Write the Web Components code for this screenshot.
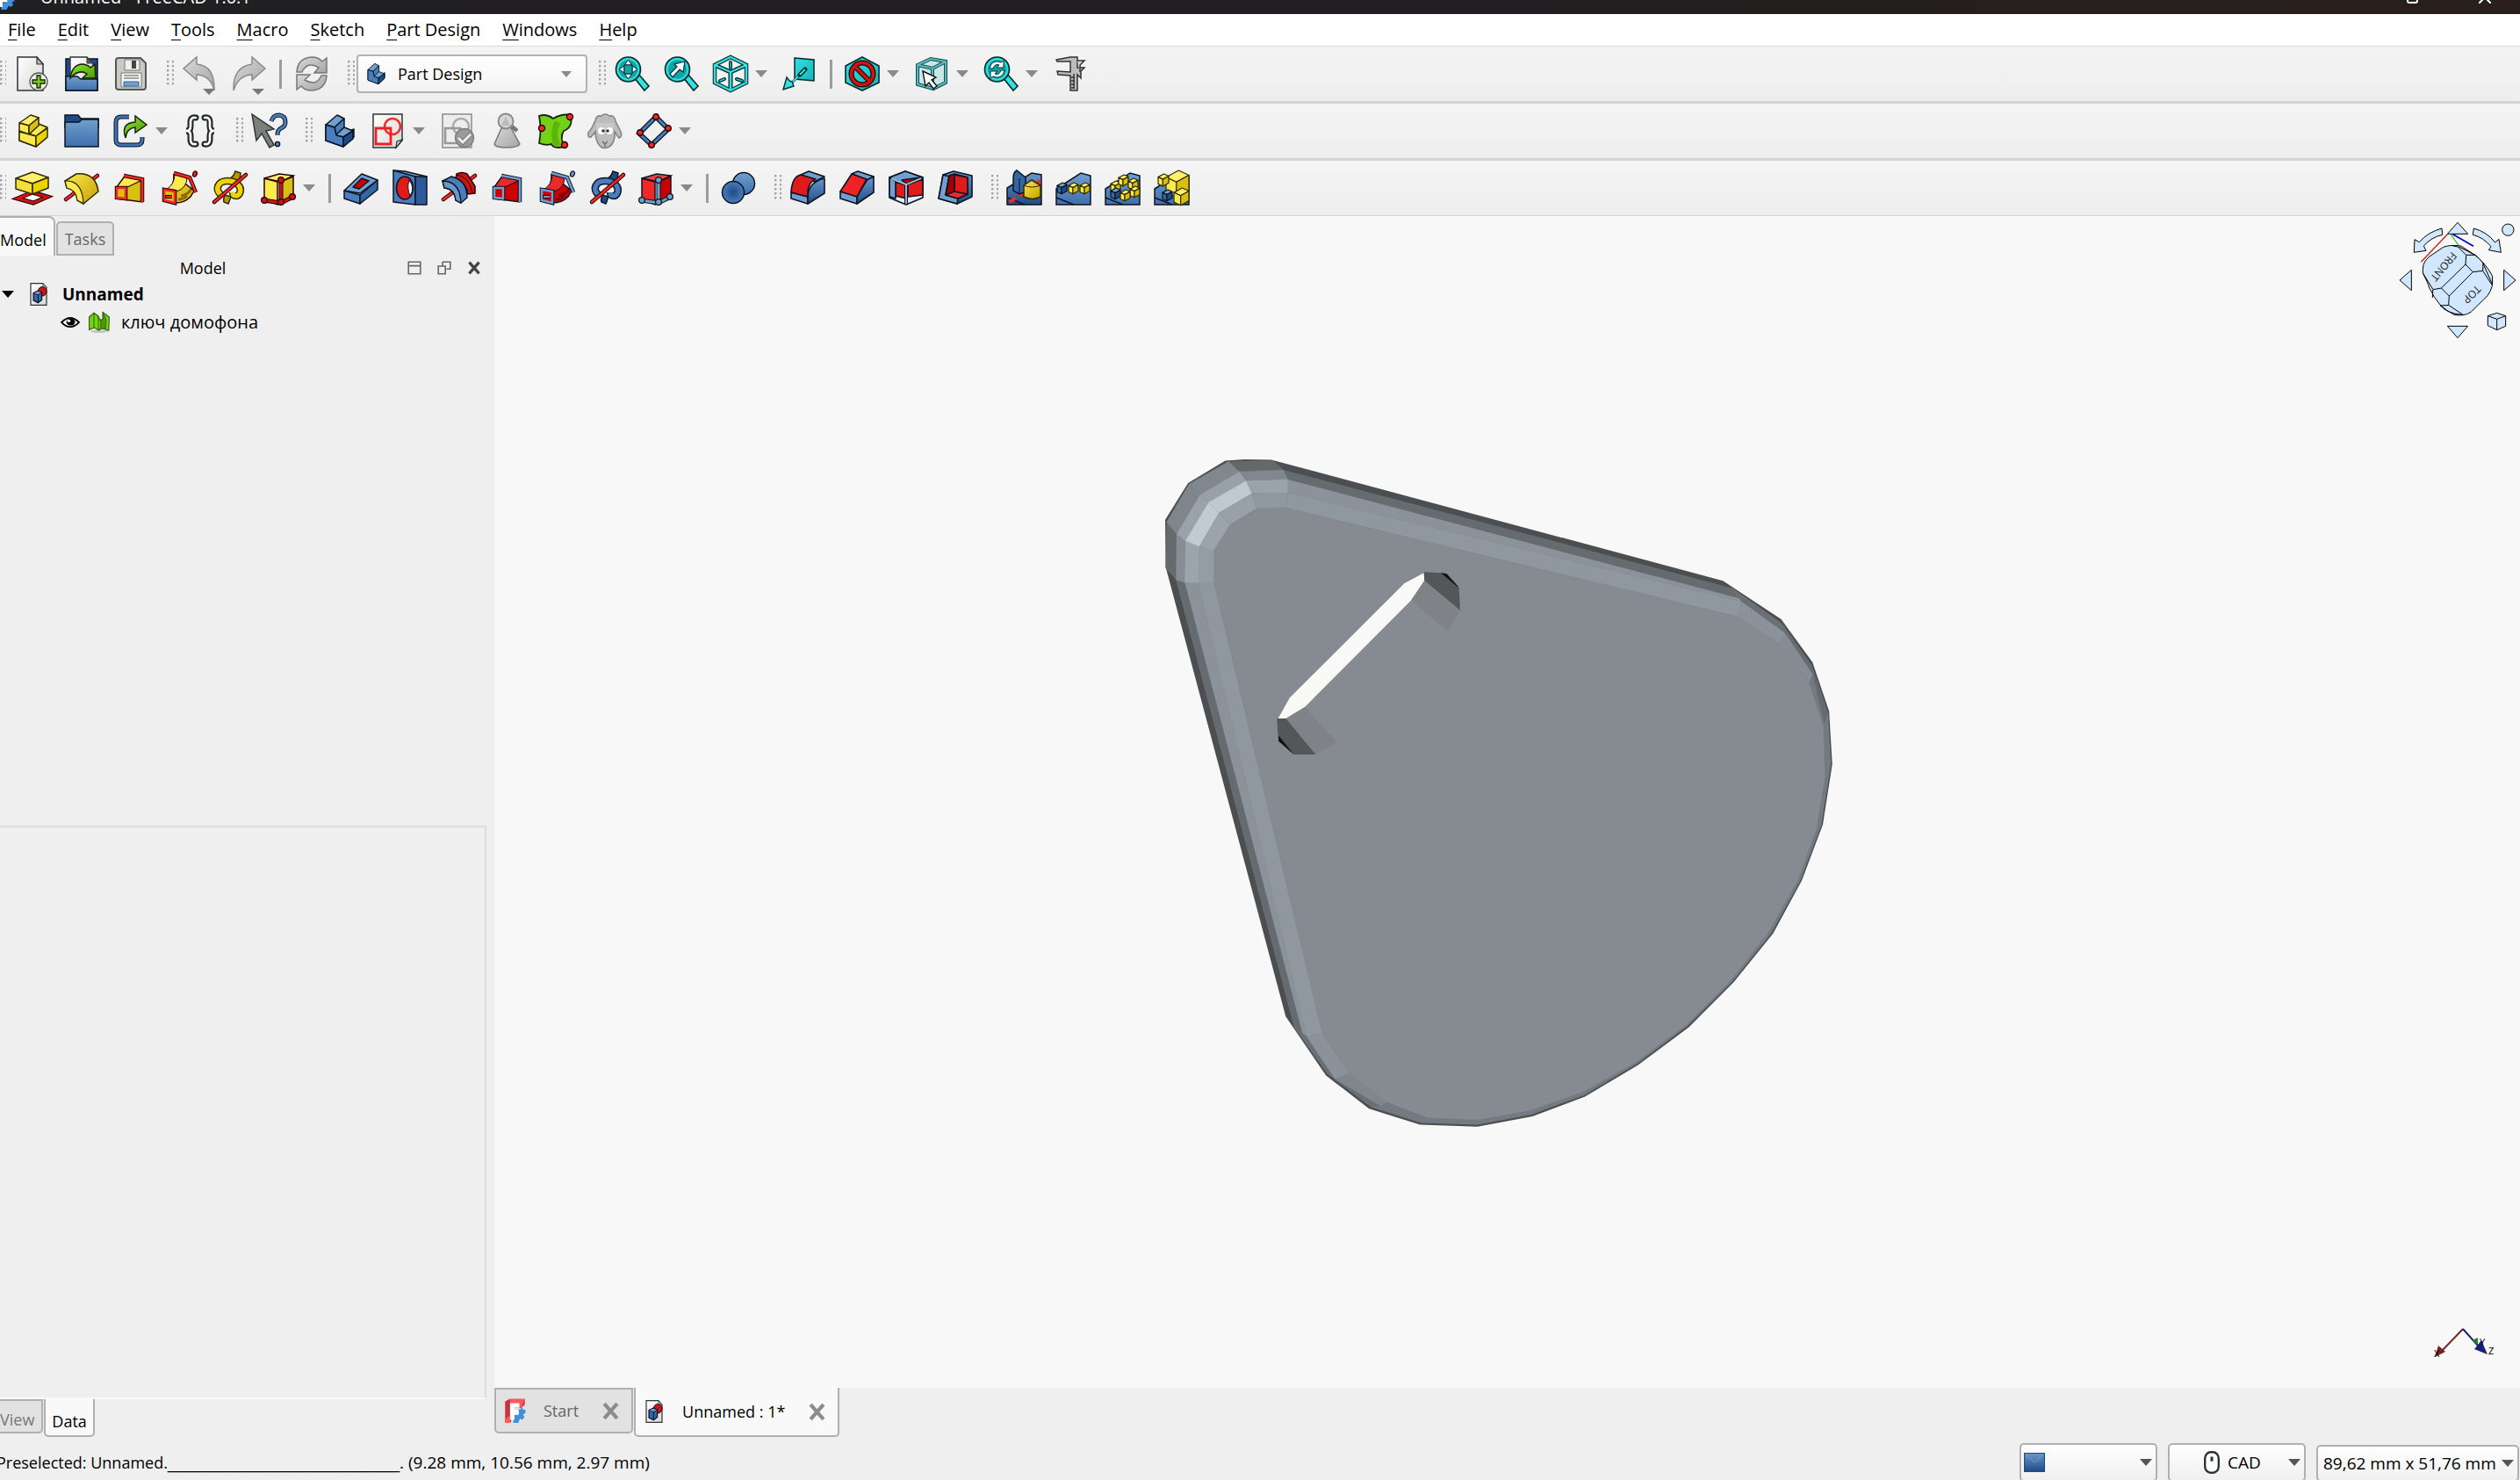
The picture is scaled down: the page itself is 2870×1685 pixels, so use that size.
<!DOCTYPE html>
<html lang="en">
<head>
<meta charset="utf-8">
<title>Unnamed - FreeCAD 1.0.1</title>
<style>
html,body{margin:0;height:100%;overflow:hidden}
body{font-family:"Open Sans","Noto Sans",sans-serif;font-size:19px;color:#000;background:#efefef}
</style>
</head>
<body>
<fc-app></fc-app>
<script>
/* ---------- icon artwork, 40 x 40 units ---------- */
const cube = (x, y, s, t, l, r, k) => {
  const h = s * .3, w = s * .55;
  return `<g stroke="${k}" stroke-width="1.2" stroke-linejoin="round"><path fill="${t}" d="M${x} ${y + h}l${w} ${-h}l${s - w} ${h * .7}l${-w} ${h}z"/><path fill="${l}" d="M${x} ${y + h}l${s - w} ${h * .7}v${s * .65}l${-(s - w)} ${-h * .7}z"/><path fill="${r}" d="M${x + s - w} ${y + h * 1.7}l${w} ${-h}v${s * .65}l${-w} ${h}z"/></g>`;
};
const yc = (x, y, s) => cube(x, y, s, '#fff06a', '#fce94f', '#d9bf10', '#302b00');
const bc = (x, y, s) => cube(x, y, s, '#729fcf', '#3465a4', '#204a87', '#0b1521');
const magnifier = inner => `<path d="M22 24l5-4 12 14-5 5z" fill="#34e0e2" stroke="#042a2a" stroke-width="1.6"/><circle cx="15.500" cy="15" r="14" fill="url(#teal)" stroke="#042a2a" stroke-width="1.6"/><circle cx="15.500" cy="15" r="11.500" fill="#0fa5a7" stroke="#34e0e2" stroke-width="1.500"/>${inner}`;
const loft = (f, f2, e, k) => `<path d="M12 8l21 3v25L4 32V19z" fill="${f2}" stroke="${k}" stroke-width="1.500"/><path d="M13 7l20 4-19 9-10-1z" fill="${f}" stroke="${k}" stroke-width="1.200"/><path d="M12 6l21 4v26" fill="none" stroke="${k}" stroke-width="4.500"/><path d="M12 6l21 4v26" fill="none" stroke="${e}" stroke-width="2.500"/><path d="M4 20h10v12l-10-1z" fill="${f}" stroke="${k}" stroke-width="4.500"/><path d="M4 20h10v12l-10-1z" fill="${f2}" stroke="${e}" stroke-width="2.500"/>`;
const pipe = (f, f2, e, k) => `<path d="M13 5l23 18-4 7q-8 8-20 7L4 26Q14 18 13 5z" fill="${f2}" stroke="${k}" stroke-width="1.500"/><path d="M14 4l14 4q0 12-12 16l-12-2Q14 16 14 4z" fill="${f}" stroke="${k}"/><path d="M21 29q8-1 12-8M18 33q6 0 10-4" fill="none" stroke="${k}" stroke-width="3" opacity=".45"/><path d="M13 3l18 5 7 17" fill="none" stroke="${k}" stroke-width="4.500"/><path d="M13 3l18 5 7 17" fill="none" stroke="${e}" stroke-width="2.500"/><path d="M2 22l12 2v13L2 34z" fill="${f}" stroke="${k}" stroke-width="4.500"/><path d="M2 22l12 2v13L2 34z" fill="${f2}" stroke="${e}" stroke-width="2.500"/><path d="M3 30h8" stroke="${k}" stroke-width="4"/><path d="M4 30h7" stroke="${e}" stroke-width="2"/><ellipse cx="37" cy="4" rx="2.200" ry="3.200" fill="${e}" stroke="${k}" stroke-width="1.300" transform="rotate(20 37 4)"/>`;
const helix = (f, f2, k) => `<path d="M19 10q6-2 8-9l6 2-1 9-6 4z" fill="${f2}" stroke="${k}" stroke-width="1.500"/><path d="M15 28l7 2-3 8-5-2q-1-3 1-8z" fill="${f2}" stroke="${k}" stroke-width="1.500"/><path d="M11 28C3 22 7 12 18 12c11 0 17 7 14 14-2 4-8 4-8-1" fill="none" stroke="${k}" stroke-width="8.500"/><path d="M11 28C3 22 7 12 18 12c11 0 17 7 14 14-2 4-8 4-8-1" fill="none" stroke="${f}" stroke-width="5.500"/><path d="M3 36L39 5" stroke="#280000" stroke-width="4.500" stroke-linecap="round"/><path d="M3 36L39 5" stroke="#ef2929" stroke-width="2.500" stroke-linecap="round"/>`;
const primitive = (l, t, r, e, k) => `<path d="M4 9l15 4v26L4 33z" fill="${l}" stroke="${k}" stroke-width="1.500"/><path d="M4 9l17-5 16 2-14 7z" fill="${t}" stroke="${k}" stroke-width="1.500"/><path d="M22 13l15-6v25l-15 6z" fill="${r}" stroke="${k}" stroke-width="1.500"/><path d="M3 34l20 3 12-6M23 37V11" fill="none" stroke="${k}" stroke-width="5"/><path d="M3 34l20 3 12-6M23 37V11" fill="none" stroke="${e}" stroke-width="3"/><g fill="${e}" stroke="${k}" stroke-width="1.300"><circle cx="4" cy="34" r="3.400"/><circle cx="23" cy="36" r="3.400"/><circle cx="36" cy="30" r="3.400"/><circle cx="23" cy="11" r="3.400"/></g>`;
const base = '<path d="M0 20L28 3l11 2v34H0z" fill="url(#blueD)" stroke="#0b1521" stroke-width="1.500"/>';
const ramp = '<path d="M0 21L28 3l11 3v33H0z" fill="url(#blue)" stroke="#0b1521" stroke-width="1.500"/><path d="M0 31l20 8" stroke="#0b1521" stroke-width="1.500"/>';

const ICONS = {
  new: `<path d="M3 1h22l7 8v30H3z" fill="url(#paper)" stroke="#2e3436" stroke-width="1.500"/><path d="M25 1v8h7z" fill="#babdb6" stroke="#2e3436" stroke-width="1.200"/><circle cx="27" cy="29" r="10" fill="#eeeeec" stroke="#555753" stroke-width="1.300"/><path d="M25 22h4v5h5v4h-5v5h-4v-5h-5v-4h5z" fill="#73d216" stroke="#17230b" stroke-width="1.300"/>`,
  open: `<path d="M2 3h36v36H2z" fill="#204a87" stroke="#0b1521" stroke-width="1.500"/><path d="M7 1h19l7 7v20H7z" fill="url(#paper)" stroke="#2e3436" stroke-width="1.300"/><path d="M26 1v7h7z" fill="#555753" stroke="#2e3436"/><path d="M2 23h13l4 3h19v13H2z" fill="url(#blue)" stroke="#0b1521" stroke-width="1.500"/><path d="M7 25Q9 10 20 9q6 0 10 4l5-4 1 16H21l5-5q-9-6-19 5z" fill="url(#green)" stroke="#17230b" stroke-width="1.500"/>`,
  save: `<path d="M6 2h25l6 6v27q0 3-3 3H6q-3 0-3-3V5q0-3 3-3z" fill="#c8cac6" stroke="#555753" stroke-width="2"/><path d="M13 4h17v12H13z" fill="#eeeeec" stroke="#777"/><path d="M21 5h5v9h-5z" fill="#444"/><path d="M9 19h23v16H9z" fill="#f6f6f6" stroke="#777"/><path d="M12 22h17M12 25h17" stroke="#555" stroke-width="1.200"/><path d="M12 29h17v5H12z" fill="#729fcf" stroke="#3465a4"/>`,
  undo: `<path d="M1 14L16 1v8q21 2 20 30Q32 22 16 21v6z" fill="url(#gray)" stroke="#8b8b8b" stroke-width="1.500"/>`,
  redo: `<path d="M38 14L23 1v8Q1 12 2 39q5-17 21-18v6z" fill="url(#gray)" stroke="#8b8b8b" stroke-width="1.500"/>`,
  refresh: `<path d="M3 18Q4 2 20 1q8 0 12 5l5-4v17H23l5-6q-13-8-19 5z" fill="url(#gray)" stroke="#777" stroke-width="1.500"/><path d="M37 22q-1 16-17 17-8 0-12-5l-5 4V21h15l-6 6q13 8 19-5z" fill="url(#gray)" stroke="#777" stroke-width="1.500"/>`,
  body: `<g stroke="#0b1521" stroke-width="1.500" stroke-linejoin="round"><path d="M5 13l10 4 1 12 12-7 9-4v9L25 38 5 31z" fill="#3465a4"/><path d="M5 13L18 2l8 4-11 10z" fill="#729fcf"/><path d="M15 16L26 6v10l-9 9z" fill="#4a7dbd"/><path d="M16 25l10-9 10 4-11 7z" fill="#729fcf"/><path d="M5 13l10 3 2 9 8 2v11L5 31z" fill="#4a7dbd"/><path d="M25 27l11-7v9L25 38z" fill="#204a87"/></g>`,
  part: `<g stroke="#302b00" stroke-width="1.500" stroke-linejoin="round"><path d="M5 20l14 5 17-9v12L24 38 5 31z" fill="#edd400"/><path d="M15 19l12-7 10 4-13 10-9-3z" fill="#fce94f"/><path d="M5 11L18 2l9 3-11 9z" fill="#fff06a"/><path d="M5 11l11 3v10L5 20z" fill="#fce94f"/><path d="M16 14L27 5v9l-11 10z" fill="#d9bf10"/><path d="M5 21l19 5v12L5 31z" fill="#fce94f"/><path d="M24 26l13-9v10L24 38z" fill="#edd400"/></g>`,
  fitall: magnifier('<g fill="#f2ffff" stroke="#042a2a" stroke-width="1"><path d="M15.500 4l4 6h-8zM15.500 26l4-6h-8zM5 15l6-4v8zM26 15l-6-4v8z"/></g><path d="M11 10h9v10h-9z" fill="#0fa5a7" stroke="#042a2a"/>'),
  fitsel: magnifier('<path d="M24 6l-2 12-4-3-8 9-3-4 8-8-3-3z" fill="#f2ffff" stroke="#042a2a" stroke-width="1.200"/>'),
  iso: `<path d="M20 1l18 9v20L20 39 2 30V10z" fill="#f2f2f2" stroke="#042a2a" stroke-width="4.500"/><path d="M2 10l18 8 18-8M20 18v21" fill="none" stroke="#042a2a" stroke-width="5"/><path d="M20 1l18 9v20L20 39 2 30V10zl0 0M2 10l18 8 18-8M20 18v21" fill="none" stroke="#34e0e2" stroke-width="2.400"/><path d="M20 7v6M8 28l5-2M27 26l6 2" stroke="#042a2a" stroke-width="4" stroke-linecap="round"/><path d="M20 7v6M8 28l5-2M27 26l6 2" stroke="#16d0d2" stroke-width="1.500" stroke-linecap="round"/>`,
  align: `<path d="M14 2l22 2v24l-22-2z" fill="url(#teal)" stroke="#042a2a" stroke-width="1.500"/><path d="M26 15l-6 6" stroke="#042a2a" stroke-width="5" stroke-linecap="round"/><path d="M26 15L10 31" stroke="#042a2a" stroke-width="3"/><path d="M26 15l-6 6M18 23l-7 7" stroke="#34e0e2" stroke-width="2"/><path d="M1 38l4-14 3 4 3 1 2 5z" fill="#34e0e2" stroke="#042a2a" stroke-width="1.400"/>`,
  style: `<path d="M20 1l19 10v19L20 39 1 30V11z" fill="url(#teal)" stroke="#042a2a" stroke-width="1.600"/><circle cx="20" cy="20" r="12.500" fill="none" stroke="#280000" stroke-width="6"/><path d="M11 11l18 18" stroke="#280000" stroke-width="6"/><circle cx="20" cy="20" r="12.500" fill="none" stroke="#cc1414" stroke-width="3.600"/><path d="M11 11l18 18" stroke="#cc1414" stroke-width="3.600"/>`,
  bound: `<path d="M4 10l15-7 17 3v24l-14 7-18-5z" fill="#c9e7e7" stroke="#0a4f50" stroke-width="4"/><path d="M4 10l17 4 15-8M21 14v23" fill="none" stroke="#0a4f50" stroke-width="4"/><path d="M4 10l15-7 17 3v24l-14 7-18-5zM4 10l17 4 15-8M21 14v23" fill="none" stroke="#5fb9ba" stroke-width="2"/><path d="M10 17l15 7-5 3 6 7-4 3-5-7-4 4z" fill="#fff" stroke="#111" stroke-width="1.400"/>`,
  sync: magnifier('<path d="M7 14q2-9 10-8l3 1 3-2v8h-8l3-3q-5-2-7 4zM24 16q-2 9-10 8l-3-1-3 2v-8h8l-3 3q5 2 7-4z" fill="#f2ffff" stroke="#042a2a"/>'),
  caliper: `<path d="M4 4L20 1h8v12h8l-4 4v8l-4-4v18h-8V22l-14-1-1-4 15 1V6H5z" fill="#babdb6" stroke="#2e3436" stroke-width="1.500"/><path d="M28 5h8l-5 5v8" fill="#d3d7cf" stroke="#2e3436" stroke-width="1.500"/><path d="M24 20v17M21 24h4M21 28h4M21 32h4M21 36h4" stroke="#2e3436" stroke-width="1.400"/>`,
  folder: `<path d="M1 2h15l3 4h20v10H1z" fill="#204a87" stroke="#0b1521" stroke-width="1.500"/><path d="M1 10h16l3-3h19v31H1z" fill="url(#blue)" stroke="#0b1521" stroke-width="1.500"/>`,
  link: `<path d="M18 4H9q-6 0-6 6v20q0 6 6 6h18q6 0 6-6v-3" fill="none" stroke="#0b1521" stroke-width="5"/><path d="M18 4H9q-6 0-6 6v20q0 6 6 6h18q6 0 6-6v-3" fill="none" stroke="#3f72b4" stroke-width="3"/><path d="M14 28q-6-17 11-18V3l13 10-13 9v-6q-10 1-11 12z" fill="url(#green)" stroke="#17230b" stroke-width="1.500"/>`,
  braces: `<g fill="none" stroke-linecap="round"><path d="M15 5q-6-1-6 5v5q0 5-5 5 5 0 5 5v5q0 6 6 5M25 5q6-1 6 5v5q0 5 5 5-5 0-5 5v5q0 6-6 5" stroke="#22282a" stroke-width="7"/><path d="M15 5q-6-1-6 5v5q0 5-5 5 5 0 5 5v5q0 6 6 5M25 5q6-1 6 5v5q0 5 5 5-5 0-5 5v5q0 6-6 5" stroke="#fff" stroke-width="2.600"/></g>`,
  whats: `<path d="M0 1l25 17-9 2 9 16-5 3-9-16-6 8z" fill="#7d7f7b" stroke="#2e3436" stroke-width="1.500"/><path d="M22 9q2-7 9-7 7 1 7 8 0 5-5 7-4 2-4 8" fill="none" stroke="#0b1521" stroke-width="5"/><path d="M22 9q2-7 9-7 7 1 7 8 0 5-5 7-4 2-4 8" fill="none" stroke="#4a7dbd" stroke-width="3"/><circle cx="29" cy="35" r="2.700" fill="#4a7dbd" stroke="#0b1521" stroke-width="1.300"/>`,
  sketch: `<path d="M3 1h33v30l-7 8H3z" fill="url(#paper)" stroke="#2e3436" stroke-width="1.500"/><path d="M29 39l1-7 6-2z" fill="#d3d7cf" stroke="#2e3436" stroke-width="1.200"/><circle cx="25" cy="15" r="9" fill="none" stroke="#ef2929" stroke-width="2.600"/><path d="M6 17h17v18H6z" fill="none" stroke="#ef2020" stroke-width="2.800"/>`,
  validate: `<path d="M3 1h33v38H3z" fill="#ededed" stroke="#8b8b8b" stroke-width="1.500"/><circle cx="24" cy="15" r="9" fill="none" stroke="#aaa" stroke-width="2.600"/><path d="M6 17h17v17H6z" fill="none" stroke="#999" stroke-width="2.600"/><circle cx="28" cy="28" r="10.500" fill="#9a9a9a" stroke="#7d7d7d" stroke-width="1.300"/><path d="M21 28l5 5 9-9" fill="none" stroke="#777" stroke-width="5"/><path d="M21 28l5 5 9-9" fill="none" stroke="#eee" stroke-width="3"/>`,
  pawn: `<path d="M15 15h9l11 20q-2 4-15 4T6 35z" fill="url(#gray)" stroke="#777" stroke-width="1.500"/><circle cx="19" cy="9" r="8.500" fill="#d6d6d6" stroke="#888" stroke-width="1.800"/><path d="M19 4l5 10H14z" fill="#bbb"/><path d="M26 15l6 5" stroke="#777" stroke-width="4.500"/>`,
  shape: `<path d="M1 3q8-3 16 3Q27 0 37 2q3 14-8 18-5 8 1 18-13 3-15-3-6 2-14-1Q4 19 1 3z" fill="#73d216" stroke="#17230b" stroke-width="1.800"/><path d="M22 10q-7 14 0 27" stroke="#4e9a06" stroke-width="7" opacity=".55" fill="none"/><g fill="#ef2929" stroke="#280000" stroke-width="1.400"><circle cx="36" cy="4" r="3.500"/><circle cx="4" cy="17" r="3.500"/><circle cx="30" cy="36" r="3.500"/></g>`,
  sheep: `<path d="M9 8Q10 2 16 3q4-4 9 0 6-1 7 6l6 12q2 6-2 7l-5-7q1 12-6 17-6 3-10 0-6-6-6-17l-5 6Q0 28 1 22q4-4 8-14z" fill="#bdbdbd" stroke="#858585" stroke-width="1.600"/><path d="M10 18q9 3 20 0v-7H10z" fill="#c9c9c9"/><circle cx="16" cy="20" r="4" fill="#fff"/><circle cx="25" cy="20" r="4" fill="#fff"/><circle cx="18" cy="20" r="1.800" fill="#333"/><circle cx="23" cy="20" r="1.800" fill="#333"/><path d="M17 32l3 3 3-3M20 35v3" fill="none" stroke="#666" stroke-width="1.300"/>`,
  datum: `<path d="M22 4l14 14-19 18L3 23z" fill="none" stroke="#0b1521" stroke-width="5.500"/><path d="M22 4l14 14-19 18L3 23z" fill="none" stroke="#4a7dbd" stroke-width="3"/><g fill="#ef2929" stroke="#280000" stroke-width="1.400"><circle cx="22" cy="4" r="3.200"/><circle cx="36" cy="17" r="3.200"/><circle cx="17" cy="36" r="3.200"/><circle cx="4" cy="22" r="3.200"/></g>`,
  pad: `<path d="M3 32l17-7 17 5-16 7z" fill="#fff" stroke="#280000" stroke-width="5"/><path d="M3 32l17-7 17 5-16 7z" fill="none" stroke="#cc1414" stroke-width="3"/><g stroke="#302b00" stroke-width="1.500" stroke-linejoin="round"><path d="M1 9L20 2l18 6-18 7z" fill="#fff06a"/><path d="M1 9l19 6v12L1 21z" fill="#f5de3a"/><path d="M20 15l18-7v12l-18 7z" fill="#edd400"/></g>`,
  revolve: `<path d="M2 33L38 6" stroke="#280000" stroke-width="4.500" stroke-linecap="round"/><path d="M2 33L38 6" stroke="#ef2929" stroke-width="2.600" stroke-linecap="round"/><path d="M1 12L14 4q22-2 25 20L22 38l-7-4Q14 22 3 20z" fill="url(#yel)" stroke="#302b00" stroke-width="1.500" stroke-linejoin="round"/><path d="M1 12q20-1 21 26-1-1-7-4Q14 22 3 20z" fill="#fce94f" stroke="#302b00" stroke-width="1.200"/>`,
  loft: loft('#fce94f', '#d9bf10', '#ef2929', '#280000'),
  pipe: pipe('#fce94f', '#d9bf10', '#ef2929', '#280000'),
  helix: helix('#edd400', '#b89700', '#302b00'),
  prim: primitive('#fce94f', '#fff06a', '#d9bf10', '#cc1414', '#280000'),
  pocket: `<g stroke="#0b1521" stroke-width="1.500" stroke-linejoin="round"><path d="M1 23L21 4l18 7-20 15z" fill="#729fcf"/><path d="M1 23l18 5v10L1 32z" fill="#4a7dbd"/><path d="M19 28l20-17v11L19 38z" fill="#3465a4"/><path d="M11 19l10-10 8 3-11 9z" fill="#cc0000"/></g>`,
  hole: `<g stroke="#0b1521" stroke-width="1.500" stroke-linejoin="round"><path d="M1 0l13 1 25 6-14 1z" fill="#729fcf"/><path d="M1 0l25 7v32L1 36z" fill="#4a7dbd"/><path d="M26 7h13v32H26z" fill="#2c5a9a"/><ellipse cx="14" cy="20" rx="9.500" ry="13" fill="#e01b1b"/><path d="M19 11q7 9 1 18-4-9-1-18z" fill="#fff" stroke-width="1"/></g>`,
  groove: `<path d="M2 33L38 6" stroke="#280000" stroke-width="4.500" stroke-linecap="round"/><path d="M2 33L38 6" stroke="#ef2929" stroke-width="2.600" stroke-linecap="round"/><path d="M17 4q6-3 12 0l9 14v8l-8 1q-2-12-14-18z" fill="#cc1414" stroke="#280000" stroke-width="1.500"/><path d="M17 5q14 2 18 20" fill="none" stroke="#280000"/><path d="M1 12l10-5q18 4 18 24l-7 6-6-3q-1-13-13-14z" fill="#4a7dbd" stroke="#0b1521" stroke-width="1.500" stroke-linejoin="round"/><path d="M1 12q20 0 21 25l-6-3q-1-13-13-14z" fill="#6a98cb" stroke="#0b1521" stroke-width="1.300"/>`,
  subloft: loft('#ef2929', '#cc0000', '#729fcf', '#0b1521'),
  subpipe: pipe('#ef2929', '#cc0000', '#729fcf', '#0b1521'),
  subhelix: helix('#4a7dbd', '#204a87', '#0b1521'),
  subprim: primitive('#ef2929', '#ef4040', '#cc0000', '#729fcf', '#0b1521'),
  bool: `<circle cx="26" cy="15" r="12.500" fill="url(#blue)" stroke="#0b1521" stroke-width="1.500"/><circle cx="14" cy="25" r="12.500" fill="url(#ball)" stroke="#0b1521" stroke-width="1.500"/>`,
  fillet: `<g stroke="#0b1521" stroke-width="1.600" stroke-linejoin="round"><path d="M1 25l19 5v8L1 32z" fill="#729fcf"/><path d="M20 30q0-16 19-21v17L20 38z" fill="url(#blueD)"/><path d="M12 5l9-4 18 6-11 6z" fill="#729fcf"/><path d="M1 25Q2 7 12 5l17 5Q19 14 20 30z" fill="#e01b1b"/></g>`,
  chamfer: `<g stroke="#0b1521" stroke-width="1.600" stroke-linejoin="round"><path d="M1 24l19 5v9L1 32z" fill="#729fcf"/><path d="M20 29l12-19 7-3v18L20 38z" fill="url(#blueD)"/><path d="M14 4l7-3 18 6-8 4z" fill="#729fcf"/><path d="M1 24L14 4l17 6-11 20z" fill="#ef2323"/></g>`,
  draft: `<g stroke="#0b1521" stroke-width="1.600" stroke-linejoin="round"><path d="M1 8l18-7 20 7v23l-19 8L1 31z" fill="#e8eef5"/><path d="M1 8l18-7 20 7-19 8z" fill="#729fcf"/><path d="M15 11l21-3-16 7z" fill="#cc0000"/><path d="M8 13l12 4v15L8 29zM22 16l17-6v18l-17 2z" fill="#e01b1b"/><path d="M1 8l7 4v20l-7-2z" fill="#729fcf"/></g><path d="M20 16v22" stroke="#0b1521" stroke-width="4"/><path d="M20 16v22M3 9l17 7 17-7" fill="none" stroke="#a8c6e6" stroke-width="1.800"/>`,
  thick: `<g stroke="#0b1521" stroke-width="1.600" stroke-linejoin="round"><path d="M6 5l12-4 21 5v24L22 38 1 32z" fill="url(#blueD)"/><path d="M6 5l7 2-4 21 14 4-1 6-21-6z" fill="#729fcf"/><path d="M13 6l6-2 15 4v19l-11 5-14-4z" fill="#a40000"/><path d="M19 5l15 3v19l-15-2z" fill="#e01b1b"/><path d="M9 28l10-4 15 3-11 5z" fill="#ef2929"/></g>`,
  mirror: base + `<path d="M0 31l20 8" stroke="#0b1521" stroke-width="1.500"/><path d="M3 36L38 12" stroke="#ef2929" stroke-width="4" stroke-dasharray="8 4"/><path d="M7 9q0-7 4-9l10 8v16l-7 3-7-4z" fill="#3465a4" stroke="#0b1521" stroke-width="1.500"/><path d="M14 9v17" stroke="#0b1521"/><path d="M19 17l9-6 10 6v13q-9 5-19 0z" fill="url(#yel)" stroke="#302b00" stroke-width="1.500"/><path d="M19 17q9 4 19 0" fill="none" stroke="#302b00"/>`,
  linear: ramp + bc(1, 14, 11) + yc(14, 14, 11) + yc(27, 14, 11),
  polar: ramp + yc(6, 12, 11) + yc(15, 5, 11) + yc(26, 9, 11) + yc(28, 18, 11) + bc(6, 20, 11) + yc(17, 22, 11),
  multi: ramp + yc(13, 0, 26) + yc(4, 4, 12) + bc(9, 22, 11) + yc(22, 20, 17),
  docfile: `<path d="M5 1h23l7 7v31H5z" fill="url(#paper)" stroke="#2e3436" stroke-width="2"/><path d="M28 1v7h7z" fill="#babdb6" stroke="#2e3436"/><circle cx="27" cy="15" r="8" fill="#cc1414" stroke="#280000" stroke-width="1.500"/><path d="M10 18l8-4 8 3v13l-7 5-9-4z" fill="#3465a4" stroke="#0b1521" stroke-width="2"/><path d="M10 18l9 3 7-4M19 21v14" fill="none" stroke="#0b1521" stroke-width="1.500"/><path d="M11 18l7-3 7 2-6 3z" fill="#729fcf"/>`,
  mesh: `<ellipse cx="20" cy="37" rx="16" ry="3" fill="#c4c4c4"/><path d="M1 10l9-8 8 6 4 8 5-2V1l12 9-1 26-13-5-6 4-8-5-10 4z" fill="#73d216" stroke="#2c5a06" stroke-width="1.800"/><path d="M27 1l6 14-1 17-9 0V16l4-2zM10 2v28M18 8l1 26" fill="#4e9a06" stroke="#2c5a06" stroke-width="1.500"/>`,
  logo: `<path d="M28 14l5 1 2 4 4-1v6l-4 2 2 5-4 4-4-2-3 7h-9V27h9v-9h6z" fill="#418fde"/><path d="M2 5l8-4h28v9l-6 5H13v24H2z" fill="#cb333b"/><path d="M10 1h28l-6 13H14z" fill="#ff585d"/><path d="M2 34l9-6v12H2z" fill="#ff585d"/><path d="M11 8h17v7h-9v4h8v7h-8v9h-8z" fill="#fff"/>`,
  eye: `<path d="M2 20Q20-3 38 20 20 43 2 20z" fill="#fff" stroke="#000" stroke-width="4"/><circle cx="21" cy="19" r="9" fill="#000"/><circle cx="17" cy="16" r="3.500" fill="#fff"/>`,
  mouse: `<rect x="7" y="2" width="26" height="36" rx="11" fill="#fff" stroke="#2e3436" stroke-width="4"/><path d="M20 10v8" stroke="#2e3436" stroke-width="5"/>`,
  view: `<path d="M1 1h38v38H1z" fill="url(#blueD)" stroke="#204a87" stroke-width="2"/><path d="M4 4l16 16L36 4" fill="none" stroke="#729fcf" stroke-width="1.500"/>`,
  dock: `<path d="M3 3h34v34H3zM3 14h34" fill="none" stroke="#666" stroke-width="4"/>`,
  float: `<path d="M15 3h22v20H26M3 15h20v22H3zM15 3v10" fill="none" stroke="#666" stroke-width="4"/>`,
  close: `<path d="M6 4l28 32M34 4L6 36" stroke="currentColor" stroke-width="8"/>`
};
const DEFS = `<defs><linearGradient id="blue" x2="0" y2="1"><stop stop-color="#729fcf"/><stop offset="1" stop-color="#3f6fae"/></linearGradient><linearGradient id="blueD" x2="0" y2="1"><stop stop-color="#6a98cb"/><stop offset="1" stop-color="#204a87"/></linearGradient><linearGradient id="paper" x2="1" y2="1"><stop stop-color="#fff"/><stop offset="1" stop-color="#d8d8d6"/></linearGradient><linearGradient id="green" x2="1" y2="1"><stop stop-color="#8ae234"/><stop offset="1" stop-color="#4e9a06"/></linearGradient><linearGradient id="gray" x2="1" y2="1"><stop stop-color="#d9d9d9"/><stop offset="1" stop-color="#a5a5a5"/></linearGradient><linearGradient id="teal" x2="1" y2="1"><stop stop-color="#34e0e2"/><stop offset="1" stop-color="#12b5b7"/></linearGradient><linearGradient id="yel" x2="1" y2="1"><stop stop-color="#fce94f"/><stop offset="1" stop-color="#c4a000"/></linearGradient><radialGradient id="ball"><stop stop-color="#204a87"/><stop offset="1" stop-color="#4a7dbd"/></radialGradient></defs>`;

const define = (name, html) => {
  const t = document.createElement('template');
  customElements.define(name, class extends HTMLElement {
    constructor() {
      super();
      t.innerHTML = typeof html === 'function' ? html(this) : html;
      this.attachShadow({ mode: 'open' }).append(t.content.cloneNode(true));
    }
  });
};

define('fc-icon', el => `<style>:host{display:block;flex:none;width:var(--w,40px);height:var(--h,40px)}svg{display:block;width:100%;height:100%;overflow:visible}</style><svg viewBox="0 0 40 40" preserveAspectRatio="none" aria-hidden="true">${DEFS}${ICONS[el.getAttribute('name')] || ''}</svg>`);

define('fc-tool', el => {
  const m = el.hasAttribute('menu'), c = el.hasAttribute('corner');
  return `<style>:host{display:block;flex:none}
button{all:unset;box-sizing:border-box;display:flex;align-items:center;position:relative;width:${m ? 79 : 56}px;height:56px;padding-left:8px}
.a{width:0;border:7px solid transparent;border-top:8px solid #8a8a8a;border-bottom:0;margin-left:8px}
.c{position:absolute;right:11px;bottom:4px;border:7px solid transparent;border-top:7px solid #777;border-bottom:0}</style>
<button aria-label="${el.getAttribute('label')}"><fc-icon name="${el.getAttribute('icon')}"></fc-icon>${m ? '<span class="a"></span>' : ''}${c ? '<span class="c"></span>' : ''}</button>`;
});

define('fc-grip', `<style>:host{display:flex;flex:none;width:23px;justify-content:flex-end}:host([first]){width:9px}
i{width:8px;height:30px;margin-right:2px;background:radial-gradient(circle at 1px 1px,#a4a4a4 1px,transparent 2px) 0 0/6px 5px}</style><i></i>`);
define('fc-sep', `<style>:host{display:flex;flex:none;width:15px;justify-content:center}i{width:3px;height:33px;background:#9c9c9c}</style><i></i>`);
define('fc-toolbar', `<style>:host{display:flex;align-items:center;height:62px;background:linear-gradient(#f4f4f4,#eeeeee);border-bottom:3px solid #d4d4d4}:host([last]){border-bottom-width:1px}</style><slot></slot>`);

define('fc-title-bar', `<style>:host{display:flex;justify-content:space-between;align-items:flex-end;height:16px;overflow:hidden;background:linear-gradient(90deg,#201f22,#211f21 60%,#291f1b);color:#fff;font-size:20px;line-height:28px}
.t{display:flex;align-items:flex-end;gap:29px;height:26px;margin-bottom:5px;--w:27px;--h:24px}
.t fc-icon{margin-left:-10px}
.b{display:flex;gap:68px;padding-right:33px;margin-bottom:12px}button{all:unset;width:14px;height:14px}svg{display:block}</style>
<div class="t"><fc-icon name="logo"></fc-icon><span>Unnamed - FreeCAD 1.0.1</span></div>
<div class="b"><button aria-label="Maximize"><svg width="14" height="14"><rect x="1" y="1" width="11" height="12" rx="2" fill="none" stroke="#fff" stroke-width="2"/></svg></button><button aria-label="Close"><svg width="14" height="14"><path d="M0 0l14 14M14 0L0 14" stroke="#fff" stroke-width="2"/></svg></button></div>`);

define('fc-menu-bar', `<style>:host{display:block;background:#fff;border-bottom:1px solid #d9d9d9}
nav{display:flex;height:36px;align-items:center;font-size:20px;padding-left:9px;gap:25px}
button{all:unset;line-height:28px}u{text-underline-offset:4px;text-decoration-thickness:1px}</style>
<nav><button><u>F</u>ile</button><button><u>E</u>dit</button><button><u>V</u>iew</button><button><u>T</u>ools</button><button><u>M</u>acro</button><button><u>S</u>ketch</button><button><u>P</u>art Design</button><button><u>W</u>indows</button><button><u>H</u>elp</button></nav>`);

define('fc-workbench', `<style>:host{display:grid;flex:none;width:263px;height:44px}
select,fc-icon,i{grid-area:1/1;align-self:center}
select{appearance:none;width:100%;height:44px;margin:0;padding:0 0 0 45px;border:2px solid #b2b2b2;border-radius:4px;background:linear-gradient(#fff,#f2f2f2);font:inherit;font-size:18px;color:#000}
fc-icon{--w:24px;--h:26px;margin-left:10px;pointer-events:none}i{justify-self:end;margin-right:18px;border:6px solid transparent;border-top:7px solid #8a8a8a;border-bottom:0;pointer-events:none}</style>
<select aria-label="Workbench"><option>Part Design</option></select><fc-icon name="body"></fc-icon><i></i>`);

define('fc-dock-panel', `<style>:host{display:flex;flex-direction:column;flex:none;width:563px;background:#efefef;line-height:26px;font-size:18px}
button{all:unset}
.tabs{display:flex;align-items:flex-end;height:45px}
.tabs button{box-sizing:border-box;height:39px;padding:5px 8px;border:2px solid #b0b0b0;border-radius:5px 5px 0 0;background:#e2e2e2;color:#666}
.tabs button.on{height:45px;padding:7px 8px 0 0;border-left:0;border-bottom:0;border-radius:0 7px 0 0;background:#f9f9f9;color:#000;margin-right:1px}
.head{display:flex;align-items:center;height:28px;padding-right:15px;gap:18px;--w:16px;--h:16px;color:#444}
.head span{flex:1;text-align:center;color:#000;padding-left:16px}
.tree{height:621px;flex:none}
.row{display:flex;align-items:center;height:32px}
.row.root{padding-left:2px;font-size:19px}
.row.root b{margin-left:15px}
.row.root fc-icon{--w:24px;--h:26px;margin-left:16px}
.ar{border:7px solid transparent;border-top:8px solid #000;border-bottom:0}
.row.leaf{padding-left:69px;font-size:20px}.row.leaf fc-icon+fc-icon{--w:24px;--h:24px;margin-left:10px;margin-right:13px}
.eye{--w:22px;--h:18px}
.props{flex:1;margin-right:9px;border:2px solid #dcdcdc;border-left:0;border-bottom-color:#f9f9f9}
.bt{display:flex;height:43px;align-items:flex-start}
.bt button{box-sizing:border-box;height:39px;padding:6px 8px 0 0;border:2px solid #b0b0b0;border-left:0;border-radius:0 0 5px 0;background:#e2e2e2;color:#777}
.bt button.on{height:43px;padding:8px 7px 0;border-left:2px solid #b0b0b0;border-top:0;border-radius:0 0 5px 5px;background:#f9f9f9;color:#000;margin-left:1px}</style>
<div class="tabs" role="tablist"><button role="tab" class="on">Model</button><button role="tab">Tasks</button></div>
<div class="head"><span>Model</span><button aria-label="Dock overlay"><fc-icon name="dock"></fc-icon></button><button aria-label="Float"><fc-icon name="float"></fc-icon></button><button aria-label="Close panel"><fc-icon name="close"></fc-icon></button></div>
<div class="tree" role="tree"><div class="row root" role="treeitem"><i class="ar"></i><fc-icon name="docfile"></fc-icon><b>Unnamed</b></div>
<div class="row leaf" role="treeitem"><fc-icon class="eye" name="eye"></fc-icon><fc-icon name="mesh"></fc-icon><span>ключ домофона</span></div></div>
<div class="props"></div>
<div class="bt" role="tablist"><button role="tab">View</button><button role="tab" class="on">Data</button></div>`);

/* facets of the rounded corner: rings run from the rim to the flat face */
const rings = [
  [[83, 440], [86, 283], [163, 153], [298, 76], [450, 73]],
  [[118, 480], [120, 325], [200, 190], [335, 110], [485, 105]],
  [[148, 490], [150, 347], [230, 215], [358, 142], [500, 137]],
  [[195, 490], [198, 367], [265, 252], [378, 185], [500, 183]],
  [[247, 487], [247, 380], [303, 292], [392, 237], [492, 233]]];
const tint = [['#656a6e', '#7f868b', '#81888d', '#636869'], ['#868d95', '#9aa2ab', '#98a0a8', '#80878e'], ['#9ca4ad', '#c2cad4', '#c0c8d2', '#9aa2ab'], ['#949ca4', '#9ba3ac', '#98a0a9', '#9099a0']];
const facets = tint.map((row, r) => row.map((c, s) => `<polygon fill="${c}" stroke="${c}" points="${[rings[r][s], rings[r][s + 1], rings[r + 1][s + 1], rings[r + 1][s]].join(' ')}"/>`).join('')).join('');
const P = (c, p) => `<polygon fill="${c}" points="${p}"/>`;

define('fc-scene', `<style>:host{display:block;position:relative;flex:1;min-height:0;background:#f8f8f8}
.model{display:block;width:100%;height:100%}
.cube{position:absolute;top:0;right:0}.axes{position:absolute;right:20px;bottom:24px}
text{font-family:"Open Sans",sans-serif}</style>
<svg class="model" viewBox="0 0 2307 1334" role="img" aria-label="3D model">
<g transform="translate(737 254) scale(.5102)">
${P('#4b4f51', '290,46 1298,316 1428,402 1498,498 1535,607 1542,725 1521,860 1474,985 1410,1103 1322,1212 1222,1312 1108,1397 990,1467 873,1511 750,1534 622,1530 508,1494 412,1420 322,1288 54,285 53,180 104,98 187,48 230,45')}
${P('#747a81', '317,69 1320,333 1428,410 1496,504 1533,612 1539,725 1518,860 1471,985 1406,1103 1319,1211 1219,1310 1106,1394 988,1464 872,1507 750,1530 624,1526 512,1490 415,1416 341,1312 77,313')}
${P('#666b6f', '317,69 1320,333 1333,355 327,90')}${P('#8b929a', '327,90 1333,355 1339,362 327,120')}${P('#8f979f', '327,120 1339,362 1332,396 322,153')}
${P('#666b6f', '77,313 97,320 360,1328 341,1312')}${P('#8b929a', '97,320 127,320 368,1332 360,1328')}${P('#8f979f', '127,320 161,318 404,1327 368,1332')}
${P('#6b7074', '1320,333 1428,410 1436,432 1339,362')}${P('#8b9299', '1339,362 1436,432 1425,456 1332,396')}
${P('#666b70', '1428,408 1496,504 1498,524 1436,432')}${P('#858c93', '1436,432 1498,524 1490,543 1425,456')}
${P('#646a6e', '1496,504 1533,612 1524,634 1498,524')}
${P('#6b7074', '341,1312 368,1332 432,1428 415,1416')}${P('#8b9299', '368,1332 404,1327 464,1415 432,1428')}
${P('#6a6f74', '415,1416 432,1428 534,1488 512,1490')}${P('#7f868c', '432,1428 464,1415 548,1480 534,1488')}
${P('#868a91', '162,250 198,192 258,155 322,153 1332,396 1425,456 1490,543 1522,640 1526,752 1507,870 1465,985 1400,1100 1315,1209 1215,1308 1103,1391 985,1457 868,1498 750,1519 638,1514 548,1480 464,1415 404,1327 161,318')}
</g>
<g transform="translate(737 254) scale(.3333)">${facets}
${P('#f9f9f8', '965,457 967,482 922,550 558,915 494,954 467,954 507,883 898,493')}
${P('#545759', '965,454 1025,457 1043,460 1085,508 1089,585 967,484')}${P('#0f1112', '1023,457 1043,460 1085,506 1077,502')}${P('#7f8388', '967,484 1089,585 1045,655 922,550')}
${P('#545759', '463,954 494,954 596,1077 520,1077 468,1030')}${P('#0f1112', '468,1012 520,1076 469,1032')}${P('#7f8388', '494,954 558,915 666,1035 596,1077')}
</g></svg>
<svg class="cube" width="170" height="160" viewBox="0 0 510 480" role="img" aria-label="Navigation cube">
<g transform="translate(0 -18)"><g fill="#d0e7fd" stroke="#000" stroke-width="3" stroke-linejoin="round">
<path d="M297 40l35 39h-70zM139 202v70l-40-35zM455 202v70l40-35zM262 394h70l-35 40z"/><circle cx="469" cy="65" r="20"/>
<path d="M243 60l2 22q-38 8-64 38l8 16-41 6 2-44 16 9q29-34 77-47zM352 60l-3 22q36 9 62 40l-8 12 42 8-7-45-13 11q-28-36-73-48z"/>
<path d="M431 349l30 10v35l-30 13-31-15v-33z"/></g><path d="M400 359l31 11 30-11M431 370v37" fill="none" stroke="#000" stroke-width="3"/>
<path d="M262 80L172 175" stroke="#cc1f1f" stroke-width="4"/><path d="M273 80l27 38" stroke="#3c3" stroke-width="4"/><path d="M280 80l71 41" stroke="#00c" stroke-width="5"/>
<path d="M248 124q24-9 60-4l48 31q34 26 59 70 2 20 0 36-5 18-16 33l-56 55q-14 10-28 11-18 2-30-1-24-12-48-34-20-22-38-60-2-12-20-46-3-12 1-31 5-14 18-26z" fill="#d0e7fd" stroke="#000" stroke-width="3"/>
<path d="M275 118q14 4 23 5l28 28-2 32-83 81-28 5-34-55M326 151h32q16 16 26 27l-1 27-34 4-25-26M349 209l-81 82-27-27M268 291l-2 31-29 2M212 270l-1 27M383 178l31 70M383 205l31 48M300 122l56 29M237 323q24 28 75 32M266 322l49 33" fill="none" stroke="#000" stroke-width="3"/>
<text font-size="36" fill="#222" transform="translate(277 138) rotate(130)">FRONT</text><text font-size="36" fill="#222" transform="translate(361 252) rotate(135)">TOP</text></g></svg>
<svg class="axes" width="80" height="54" role="img" aria-label="Axes"><path d="M35 11L10 37" stroke="#7a2222" stroke-width="2"/><path d="M3 43l4-13 8 7z" fill="#7a2222"/><path d="M35 11l18 20" stroke="#1d1d7a" stroke-width="2"/><path d="M45 24l7-3v8z" fill="#2a7a2a"/><path d="M63 40l-15-6 8-10z" fill="#1d1d7a"/><text x="2" y="43" font-size="11">X</text><text x="54" y="30" font-size="11">Y</text><text x="64" y="40" font-size="11">Z</text></svg>`);

define('fc-doc-tabs', `<style>:host{display:flex;flex:none;align-items:flex-start;height:56px;line-height:26px;font-size:18px}
.t{box-sizing:border-box;display:flex;align-items:center;height:52px;border:2px solid #b0b0b0;border-radius:0 0 5px 5px;background:#e2e2e2;color:#666;padding:0 13px 0 9px}
.t.on{height:56px;border-top:0;background:#f9f9f9;color:#000;margin-left:1px}
.t>button:not(.x){margin:0 26px 0 20px}
button{all:unset}.x{color:#8c8c8c;--w:21px;--h:21px}
.s>fc-icon{--w:25px;--h:28px}
.on>fc-icon{--w:24px;--h:26px}</style>
<div class="t s"><fc-icon name="logo"></fc-icon><button role="tab">Start</button><button class="x" aria-label="Close Start"><fc-icon name="close"></fc-icon></button></div>
<div class="t on"><fc-icon name="docfile"></fc-icon><button role="tab">Unnamed : 1*</button><button class="x" aria-label="Close Unnamed"><fc-icon name="close"></fc-icon></button></div>`);

define('fc-status-bar', `<style>:host{display:flex;flex:none;height:42px;padding:7px 1px 0 0;overflow:hidden;align-items:flex-start;gap:12px}
p{margin:0 auto 0 -4px;line-height:44px;white-space:pre}.l{font-size:18px}.n{font-family:"Liberation Sans",sans-serif}
button{all:unset;box-sizing:border-box;display:flex;align-items:center;width:157px;height:44px;border:2px solid #b0b0b0;border-radius:5px;background:linear-gradient(#fff,#f0f0f0);padding:0 4px 0 3px}
button i{margin-left:auto;border:7px solid transparent;border-top:8px solid #555;border-bottom:0}
.v{--w:24px;--h:22px}.m{--w:24px;--h:26px;padding-left:36px}.m span{margin-left:6px}
.d{width:231px;margin-top:2px;height:42px;padding-left:6px}</style>
<p><span class="l">Preselected: Unnamed.</span><span class="n">_________________________</span>. (9.28 mm, 10.56 mm, 2.97 mm)</p>
<button class="v" aria-label="Notification area"><fc-icon name="view"></fc-icon><i></i></button>
<button class="m"><fc-icon name="mouse"></fc-icon><span>CAD</span><i></i></button>
<button class="d">89,62 mm x 51,76 mm<i></i></button>`);

const T = (icon, label, flag = '') => `<fc-tool icon="${icon}" label="${label}" ${flag}></fc-tool>`;
const G = '<fc-grip></fc-grip>', G1 = '<fc-grip first></fc-grip>', S = '<fc-sep></fc-sep>';
define('fc-app', `<style>:host{display:flex;flex-direction:column;height:100vh;overflow:hidden}
main{display:flex;flex:1;min-height:0}section{display:flex;flex-direction:column;flex:1;min-width:0}</style>
<fc-title-bar></fc-title-bar><fc-menu-bar></fc-menu-bar>
<fc-toolbar>${G1}${T('new', 'New')}${T('open', 'Open')}${T('save', 'Save')}${G}${T('undo', 'Undo', 'corner')}${T('redo', 'Redo', 'corner')}${S}${T('refresh', 'Refresh')}${G}<fc-workbench></fc-workbench>${G}${T('fitall', 'Fit all')}${T('fitsel', 'Fit selection')}${T('iso', 'Isometric', 'menu')}${T('align', 'Align to selection')}${S}${T('style', 'Draw style', 'menu')}${T('bound', 'Selection view', 'menu')}${T('sync', 'Sync view', 'menu')}${T('caliper', 'Measure')}</fc-toolbar>
<fc-toolbar>${G1}${T('part', 'Part')}${T('folder', 'Group')}${T('link', 'Link', 'menu')}${T('braces', 'Variable set')}${G}${T('whats', 'Help')}${G}${T('body', 'Body')}${T('sketch', 'Sketch', 'menu')}${T('validate', 'Validate sketch')}${T('pawn', 'Check geometry')}${T('shape', 'Shape binder')}${T('sheep', 'Clone')}${T('datum', 'Datum', 'menu')}</fc-toolbar>
<fc-toolbar last>${G1}${T('pad', 'Pad')}${T('revolve', 'Revolution')}${T('loft', 'Additive loft')}${T('pipe', 'Additive pipe')}${T('helix', 'Additive helix')}${T('prim', 'Additive primitive', 'menu')}${S}${T('pocket', 'Pocket')}${T('hole', 'Hole')}${T('groove', 'Groove')}${T('subloft', 'Subtractive loft')}${T('subpipe', 'Subtractive pipe')}${T('subhelix', 'Subtractive helix')}${T('subprim', 'Subtractive primitive', 'menu')}${S}${T('bool', 'Boolean')}${G}${T('fillet', 'Fillet')}${T('chamfer', 'Chamfer')}${T('draft', 'Draft')}${T('thick', 'Thickness')}${G}${T('mirror', 'Mirrored')}${T('linear', 'Linear pattern')}${T('polar', 'Polar pattern')}${T('multi', 'Multi-transform')}</fc-toolbar>
<main><fc-dock-panel></fc-dock-panel><section><fc-scene></fc-scene><fc-doc-tabs></fc-doc-tabs></section></main>
<fc-status-bar></fc-status-bar>`);
</script>
</body>
</html>
